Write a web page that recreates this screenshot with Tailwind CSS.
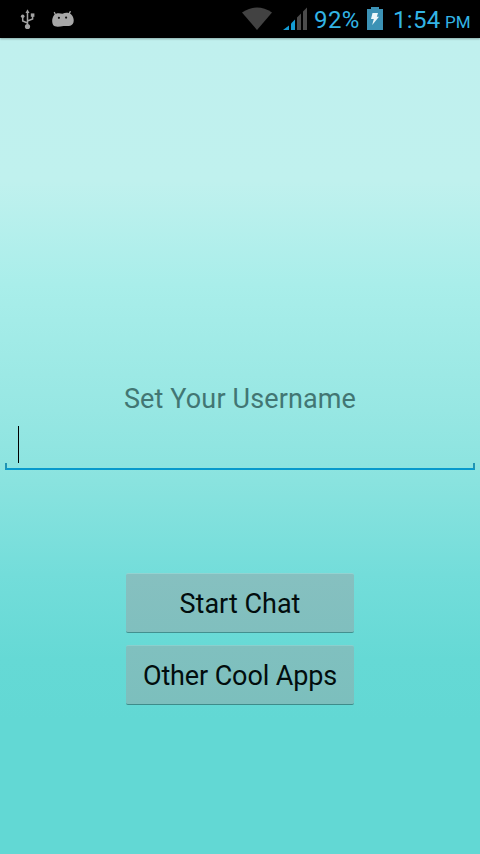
<!DOCTYPE html>
<html lang="en">
<head>
<meta charset="utf-8">
<title>Set Your Username</title>
<script src="https://cdn.jsdelivr.net/npm/@tailwindcss/browser@4"></script>
</head>
<body class="flex h-[854px] w-[480px] flex-col overflow-hidden bg-[linear-gradient(to_bottom,#c0f0ee_38px,#c0f1ee_180px,#a9eeea_285px,#97e7e3_410px,#8ae3df_480px,#73ddda_575px,#65d9d5_660px,#62d8d4_720px,#62d8d4_854px)] font-['Roboto',sans-serif]">
  <header class="flex h-[38px] shrink-0 items-center bg-black whitespace-nowrap text-[#33b5e5] shadow-[0_1px_2px_rgba(0,0,0,0.3)]">
    <svg class="ml-5 h-[38px] w-4" viewBox="0 0 16 38" fill="none" stroke="#a2a2a2" stroke-width="1.5">
      <path d="M7.5 12v14M7.5 23L2.7 21V16M7.5 21L12.6 19V15"/>
      <path d="M5.5 13L7.5 9.3l2 3.7z" fill="#a2a2a2" stroke="none"/>
      <circle cx="2.7" cy="16.2" r="1.8" fill="#a2a2a2" stroke="none"/>
      <path d="M10.8 13.4h3.6v3.4h-3.6z" fill="#a2a2a2" stroke="none"/>
      <circle cx="7.5" cy="26.5" r="2.6" fill="#a2a2a2" stroke="none"/>
    </svg>
    <svg class="ml-4 h-[38px] w-[22px]" viewBox="0 0 22 38">
      <path d="M3.4 14.5L2.4 12.5M16.8 14.5L18.2 11.6" stroke="#a7a7a7" stroke-width="1.3" stroke-linecap="round"/>
      <path d="M2 15.2C3.8 13 7 12.8 10.5 13.8C13.5 12.3 17.3 12.6 19.5 14.7C22 17.5 22.4 21.5 20.7 24C18.9 26.5 15.2 26 11.5 25.9C7.4 26.8 2.8 27.5 1 24.8C-.4 22.3 0 17.8 2 15.2Z" fill="#a7a7a7"/>
      <circle cx="6.9" cy="17.8" r="1.1" fill="#111"/><circle cx="14.1" cy="17.6" r="1.1" fill="#111"/>
    </svg>
    <svg class="ml-[168px] h-[38px] w-[30px]" viewBox="0 0 30 38"><path d="M0 12.6Q15 2.5 30 12.6L15 30Z" fill="#424242"/></svg>
    <svg class="ml-[11px] h-[38px] w-6" viewBox="0 0 24 38">
      <path d="M0 30L6 25.5V30Z" fill="#139bd3"/><path d="M8 23.5L12 19.5V30H8Z" fill="#139bd3"/>
      <path d="M14 17.5L18 13.5V30H14ZM20 11.5L24 7.5V30H20Z" fill="#4b4b4b"/>
    </svg>
    <span class="ml-[7px] w-[45px] pt-0.5 text-[24px] leading-9 tracking-[0.4px]">92%</span>
    <svg class="ml-2 h-[38px] w-4" viewBox="0 0 16 38"><path d="M0 9H4V7H12V9H16V30H0Z" fill="#3c92b5"/><path d="M5.5 13H11L9.8 16.8H12L5.2 25L6.8 19H4Z" fill="#edf8fb"/></svg>
    <span class="ml-[10px] w-12 pt-0.5 text-[24px] leading-9 tracking-[0.3px]">1:54</span>
    <span class="ml-1 pt-[7px] text-[17px] leading-[31px]">PM</span>
  </header>
  <main class="flex flex-1 flex-col items-center">
    <label for="username" class="mt-[343px] h-9 text-[27px] leading-9 tracking-[0.13px] whitespace-nowrap text-[#427673]">Set Your Username</label>
    <div class="mt-[9px] flex h-[44px] w-[470px] flex-col">
      <div id="username" role="textbox" class="ml-[13px] h-[37px] border-l border-black pl-px"></div>
      <div class="h-[7px] border-x-2 border-b-2 border-[#0799cc] border-x-[#2094b3]"></div>
    </div>
    <div class="mt-[103px] flex w-[228px] flex-col gap-3">
      <button class="h-[60px] rounded-[2px] border-t border-b border-t-[#93d3d1] border-b-[#43908f] bg-[linear-gradient(#86c0c0,#80bfbe)] pt-px text-[27px] leading-8 whitespace-nowrap text-[#020d0d]">Start Chat</button>
      <button class="h-[60px] rounded-[2px] border-t border-b border-t-[#8bcfcd] border-b-[#3d8c8a] bg-[linear-gradient(#80c0bf,#7cbfbd)] pt-px text-[27px] leading-8 tracking-[-0.12px] whitespace-nowrap text-[#020d0d]">Other Cool Apps</button>
    </div>
  </main>
</body>
</html>
